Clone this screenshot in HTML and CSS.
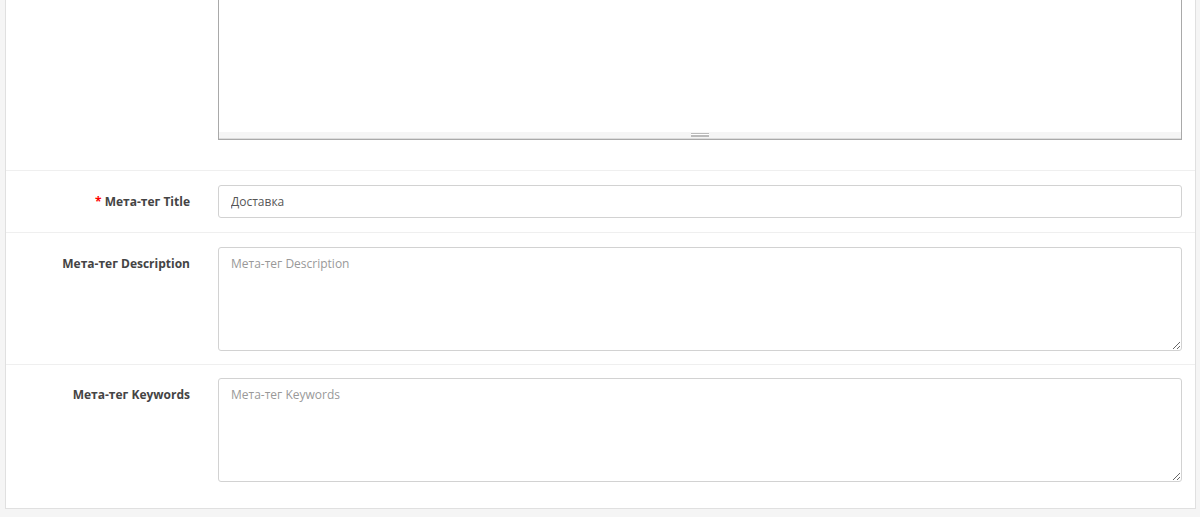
FILE: index.html
```html
<!DOCTYPE html>
<html lang="ru">
<head>
    <meta charset="UTF-8">
    <meta name="viewport" content="width=device-width, initial-scale=1.0">
    <title>Доставка</title>
    <link rel="stylesheet" href="styles.css">
</head>
<body>
    <div class="panel">
        <div class="form-group first">
            <div class="control-label"></div>
            <div class="field">
                <div class="note-editor">
                    <div class="note-editable"></div>
                    <div class="note-statusbar"><div class="note-resizebar"></div></div>
                </div>
            </div>
        </div>
        <div class="form-group">
            <label class="control-label required" for="meta-title">Мета-тег Title</label>
            <div class="field"><input id="meta-title" class="form-control" type="text" value="Доставка"></div>
        </div>
        <div class="form-group desc">
            <label class="control-label" for="meta-description">Мета-тег Description</label>
            <div class="field"><textarea id="meta-description" class="form-control" placeholder="Мета-тег Description"></textarea></div>
        </div>
        <div class="form-group last">
            <label class="control-label" for="meta-keyword">Мета-тег Keywords</label>
            <div class="field"><textarea id="meta-keyword" class="form-control" placeholder="Мета-тег Keywords"></textarea></div>
        </div>
    </div>
</body>
</html>
```

FILE: styles.css
```css
body { margin: 0; background-color: #f5f5f5; font-family: 'Open Sans', 'DejaVu Sans', sans-serif; font-size: 12px; color: #666; }
.panel { margin: 0 4px 0 5px; background-color: #fff; border: 1px solid #e0e0e0; border-top: none; }
.form-group { display: grid; grid-template-columns: 184px 1fr; column-gap: 28px; padding: 14px 13px 14px 0; border-top: 1px solid #efefef; }
.form-group.first { padding-top: 0; padding-bottom: 30px; border-top: none; }
.form-group.desc { padding-bottom: 13px; }
.form-group.last { padding-top: 13px; padding-bottom: 26px; }
.control-label { text-align: right; font-weight: bold; color: #444; padding-top: 8px; line-height: 17px; }
.required::before { content: "* "; color: #f00; font-weight: bold; }
.form-control { display: block; box-sizing: border-box; width: 100%; margin: 0; border: 1px solid #d2d2d2; border-radius: 3px; padding: 7px 12px; font-family: 'Open Sans', 'DejaVu Sans', sans-serif; font-size: 12px; line-height: 17px; color: #555; background-color: #fff; outline: none; }
input.form-control { height: 33px; }
textarea.form-control { height: 104px; resize: vertical; }
.form-control::placeholder { color: #999; }
.note-editor { border: 1px solid #a9a9a9; border-top: none; }
.note-editable { height: 132px; background-color: #fff; }
.note-statusbar { height: 6px; background-color: #f5f5f5; border-bottom: 1px solid #dcdcdc; display: flex; justify-content: center; align-items: center; }
.note-resizebar { width: 18px; height: 4px; border-top: 1px solid #bbb; border-bottom: 1px solid #bbb; background: linear-gradient(#fff 0 1px, #bbb 1px 2px, #fff 2px); box-sizing: border-box; }
```
